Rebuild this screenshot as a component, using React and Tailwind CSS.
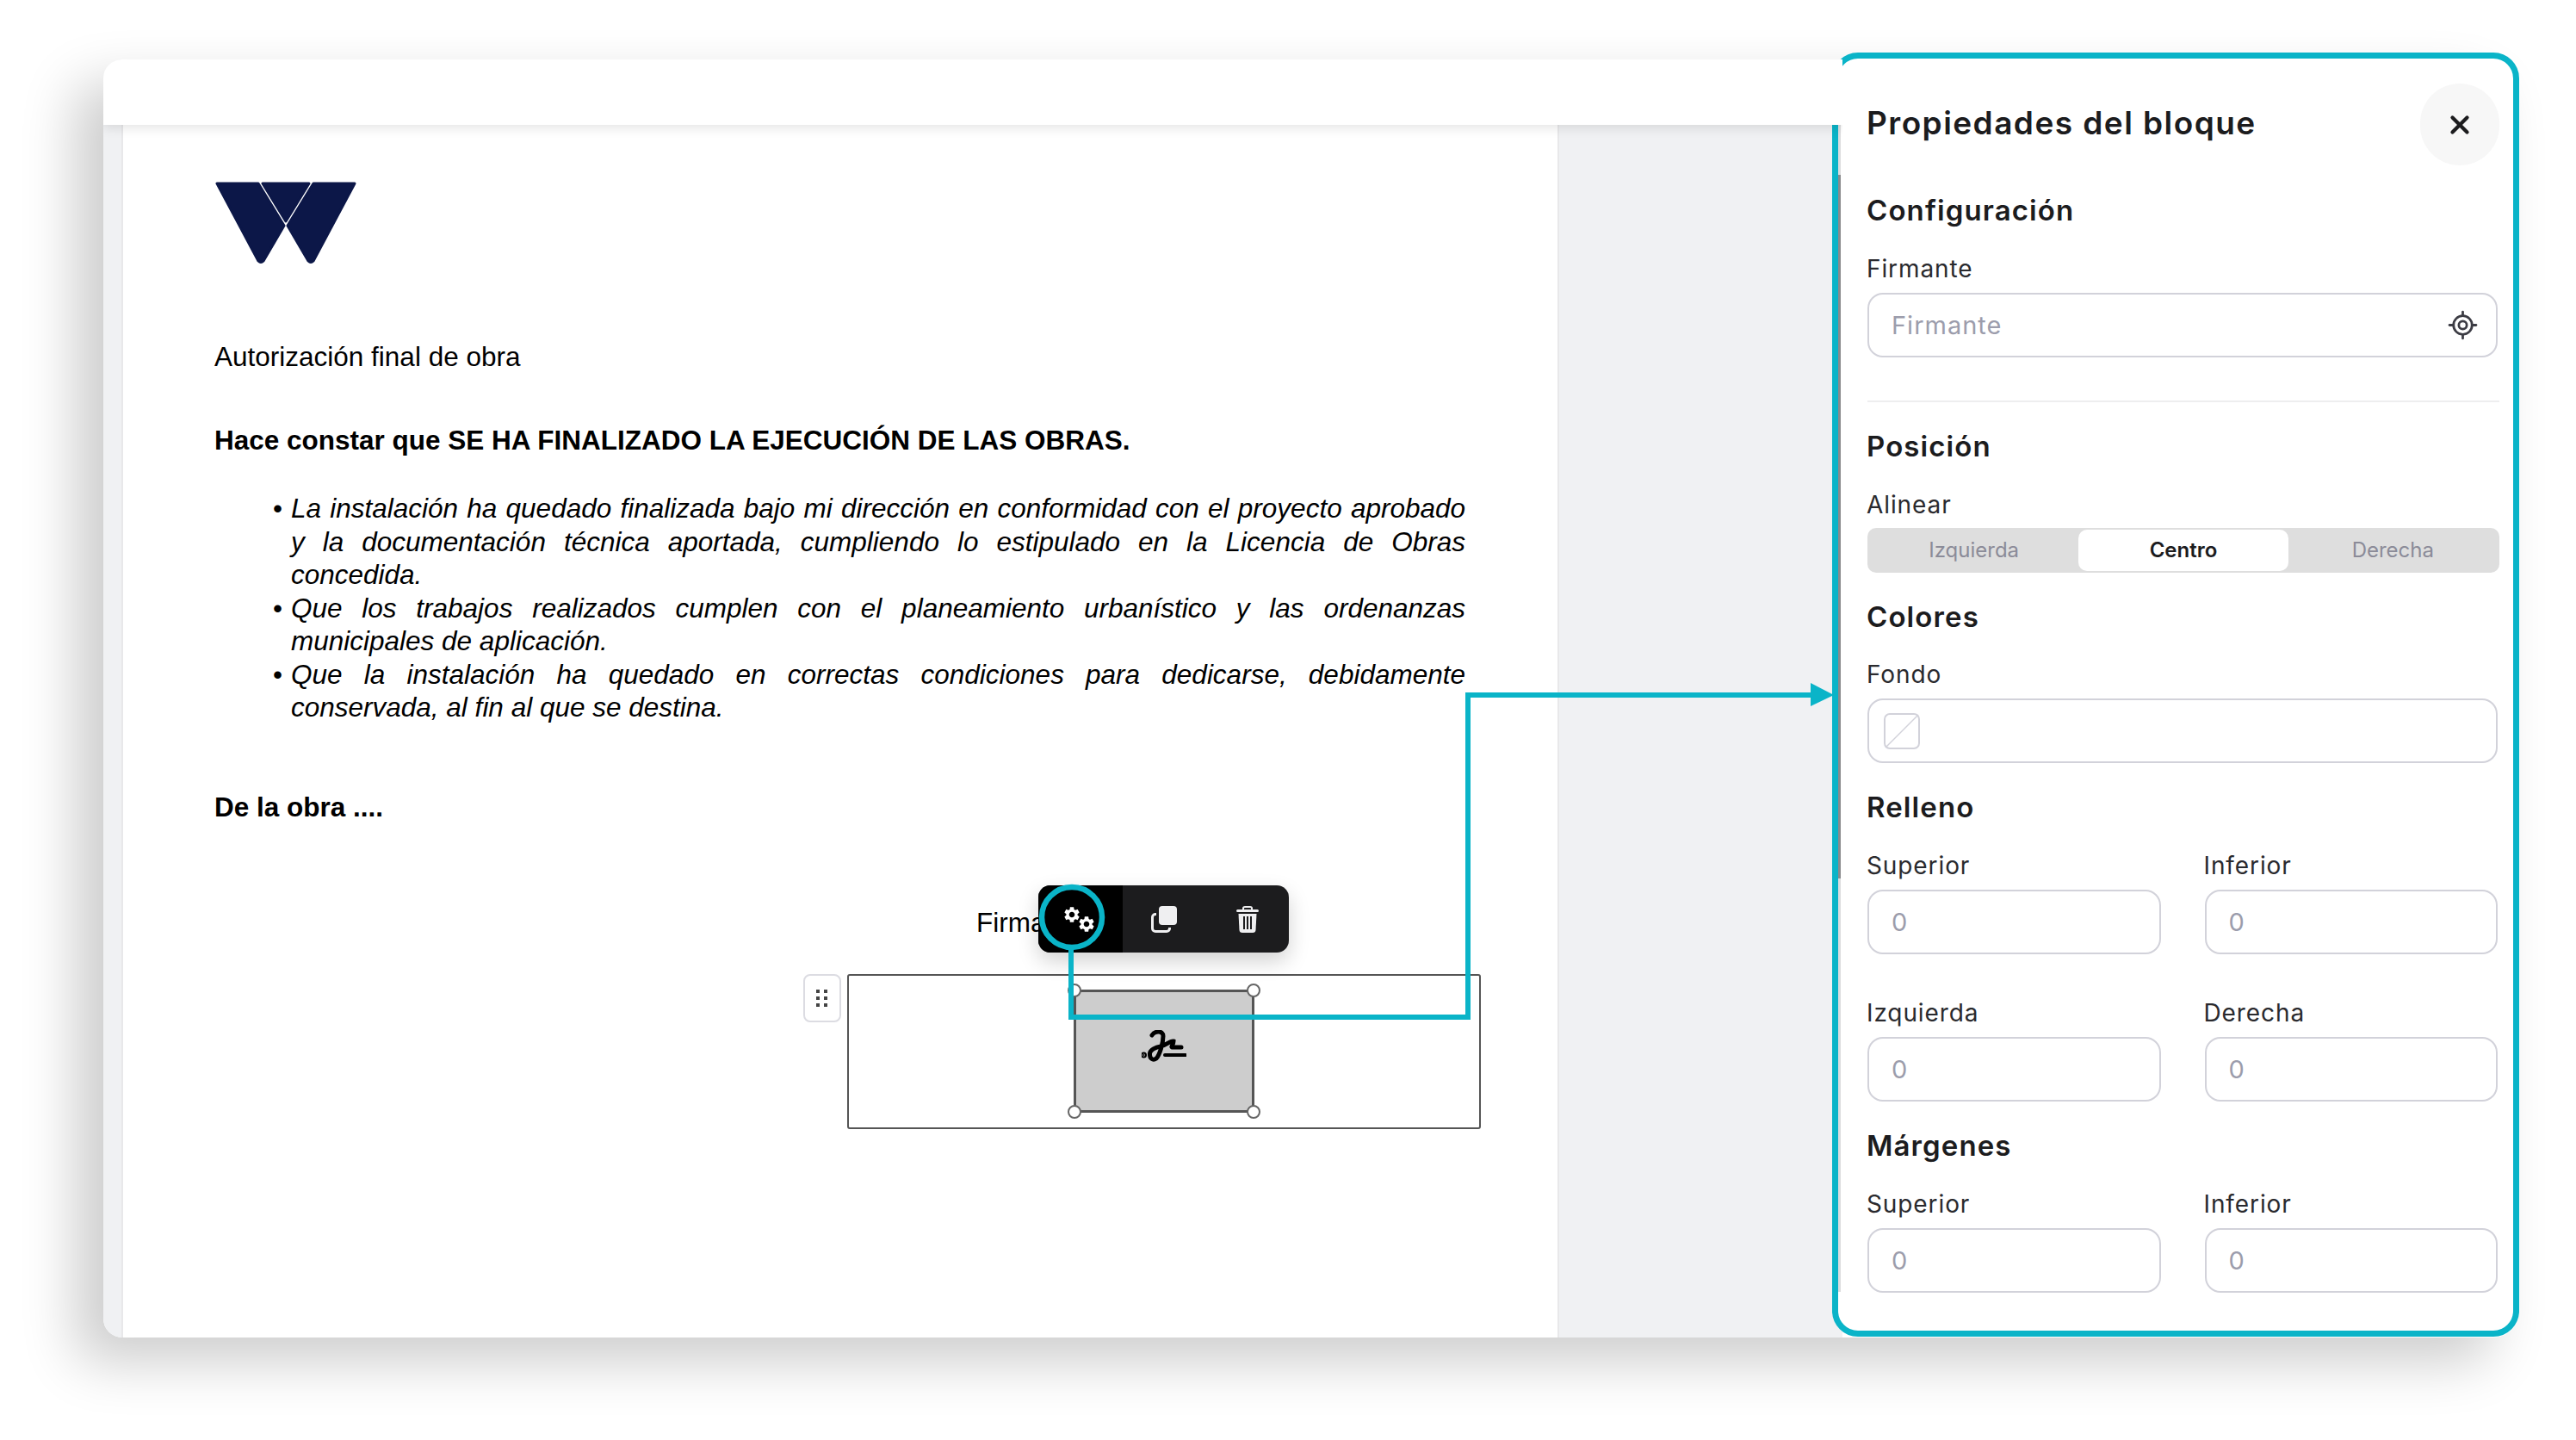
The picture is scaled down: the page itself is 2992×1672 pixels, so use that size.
import React from 'react';
import { X, LocateFixed } from 'lucide-react';
import { MdSettings } from 'react-icons/md';

const TEAL = '#0ab4c8';

const Logo = () => (
    <svg viewBox="0 0 164 96" className="ml-[1px] w-[164px] h-[96px] block" fill="#0c1748" stroke="#0c1748" strokeWidth="3" strokeLinejoin="round">
        <path d="M2 2 H50 L80 51 L56 92 Q53 95 50 92 Z" />
        <path d="M114 2 H162 L114 92 Q111 95 108 92 L84 51 Z" />
        <path d="M55 2 H109 L82 46 Z" />
    </svg>
);

const CopyIcon = () => (
    <svg viewBox="0 0 30 31" className="w-[30px] h-[31px]" fill="none">
        <rect x="9" y="0" width="21" height="22" rx="4" fill="#efeff1" />
        <path d="M6 9.5 H5 A3.5 3.5 0 0 0 1.5 13 V26 A3.5 3.5 0 0 0 5 29.5 H18 A3.5 3.5 0 0 0 21.5 26 V25" stroke="#efeff1" strokeWidth="3" />
    </svg>
);

const TrashIcon = () => (
    <svg viewBox="0 0 26 31" className="w-[26px] h-[31px]" fill="none">
        <path d="M8 4 V2.5 Q8 1 10 1 H16 Q18 1 18 2.5 V4" stroke="#efeff1" strokeWidth="2" />
        <rect x="0" y="4" width="26" height="3" rx="1.5" fill="#efeff1" />
        <path d="M2.5 9 H23.5 L22.5 28 Q22.3 31 19 31 H7 Q3.7 31 3.5 28 Z" fill="#efeff1" />
        <rect x="8" y="12" width="2" height="15" fill="#1c1c1e" />
        <rect x="12" y="12" width="2" height="15" fill="#1c1c1e" />
        <rect x="16" y="12" width="2" height="15" fill="#1c1c1e" />
    </svg>
);

const SignatureIcon = () => (
    <svg viewBox="0 0 52 37" className="w-[52px] h-[37px]" fill="none" stroke="#000" strokeWidth="5" strokeLinecap="round">
        <path d="M12 6 C15 1 25 0 25 7 C25 15 21 29 17 33 C13 36 9 33 9.5 27 C10 23 16 20 22 19 C28 18 33 12 37 13 C37 17 33 20 36 20 H46" />
        <path d="M27 29 H51" strokeWidth="4" />
        <circle cx="2.5" cy="29" r="1" fill="#000" />
    </svg>
);

const Corner = ({ className }) => (
    <span className={`absolute w-[16px] h-[16px] rounded-full bg-white border-2 border-[#666] ${className}`} />
);

const Heading = ({ className = '', children }) => (
    <h3 className={`-ml-[1px] text-[33px] leading-[40px] font-semibold tracking-[1.1px] text-[#1c1c1e] ${className}`}>{children}</h3>
);

const Label = ({ className = '', children }) => (
    <label className={`block -ml-[1px] text-[28px] leading-[36px] tracking-[0.9px] text-[#2a2a2e] ${className}`}>{children}</label>
);

const Field = ({ placeholder }) => (
    <input
        placeholder={placeholder}
        className="block w-full h-[75px] px-[26px] rounded-[18px] border-2 border-[#d2d2da] bg-white text-[29px] tracking-[1px] outline-none placeholder:text-[#9c9dac]"
    />
);

const TwoInputs = ({ left, right, className = '' }) => (
    <div className={`grid grid-cols-2 gap-x-[51px] pr-[2px] ${className}`}>
        <div>
            <Label>{left}</Label>
            <div className="mt-[10px]"><Field placeholder="0" /></div>
        </div>
        <div>
            <Label>{right}</Label>
            <div className="mt-[10px]"><Field placeholder="0" /></div>
        </div>
    </div>
);

const PropertiesPanel = () => (
    <aside className="absolute left-[2008px] top-[-8px] w-[798px] h-[1491px] rounded-[30px] border-[7px] border-[#0ab4c8] bg-white pl-[34px] pr-[16px] pt-[29px] font-[Inter,sans-serif]">
        {/* grey sliver along the inside of the left edge */}
        <span className="absolute left-0 top-[28px] w-[3px] h-[107px] bg-[#dcdcde]" />
        <span className="absolute left-0 top-[135px] w-[3px] h-[817px] bg-[#8a8a8c]" />
        <span className="absolute left-0 top-[952px] w-[3px] h-[480px] bg-[#dcdcde]" />
        <div className="flex items-center justify-between h-[95px]">
            <h2 className="-ml-[1px] pb-[3px] text-[37px] font-semibold tracking-[1.45px] text-[#1c1c1e]">Propiedades del bloque</h2>
            <button type="button" className="w-[92px] h-[95px] rounded-full bg-[#f7f7f7] flex items-center justify-center text-[#1c1c1e]">
                <X className="w-[34px] h-[34px]" strokeWidth={3} />
            </button>
        </div>

        <Heading className="mt-[32px]">Configuración</Heading>
        <Label className="mt-[30px]">Firmante</Label>
        <div className="relative mt-[10px] mr-[2px]">
            <Field placeholder="Firmante" />
            <LocateFixed className="absolute right-[22px] top-[19px] w-[37px] h-[37px] text-[#3c3c44]" strokeWidth={1.8} />
        </div>
        <div className="mt-[50px] h-[2px] bg-[#eeeeef]" />

        <Heading className="mt-[31px]">Posición</Heading>
        <Label className="mt-[30px]">Alinear</Label>
        <div className="mt-[9px] h-[52px] rounded-[10px] bg-[#dedede] grid grid-cols-3 p-[2px] text-[24px] text-[#8b8b98]">
            <span className="flex items-center justify-center">Izquierda</span>
            <span className="flex items-center justify-center rounded-[10px] bg-white font-semibold text-[#1c1c1e]">Centro</span>
            <span className="flex items-center justify-center">Derecha</span>
        </div>

        <Heading className="mt-[31px]">Colores</Heading>
        <Label className="mt-[29px]">Fondo</Label>
        <div className="mt-[10px] mr-[2px] h-[75px] rounded-[18px] border-2 border-[#d2d2da] flex items-center pl-[17px]">
            <svg viewBox="0 0 42 42" className="w-[42px] h-[42px]" fill="none" stroke="#d2d2da" strokeWidth="1.5">
                <rect x="1" y="1" width="40" height="40" rx="6" strokeWidth="2" />
                <path d="M2 40 L40 2" />
            </svg>
        </div>

        <Heading className="mt-[31px]">Relleno</Heading>
        <TwoInputs left="Superior" right="Inferior" className="mt-[30px]" />
        <TwoInputs left="Izquierda" right="Derecha" className="mt-[50px]" />

        <Heading className="mt-[31px]">Márgenes</Heading>
        <TwoInputs left="Superior" right="Inferior" className="mt-[30px]" />
    </aside>
);

const bullets = [
    'La instalación ha quedado finalizada bajo mi dirección en conformidad con el proyecto aprobado y la documentación técnica aportada, cumpliendo lo estipulado en la Licencia de Obras concedida.',
    'Que los trabajos realizados cumplen con el planeamiento urbanístico y las ordenanzas municipales de aplicación.',
    'Que la instalación ha quedado en correctas condiciones para dedicarse, debidamente conservada, al fin al que se destina.',
];

const Document = () => (
    <div className="w-[1670px] h-full bg-white border-x-2 border-[#e8e8ea] pt-[66px] pl-[106px] font-['Liberation_Sans',Arial,sans-serif] text-[31.5px] leading-[38px] text-black">
        <Logo />
        <p className="mt-[88px]">Autorización final de obra</p>
        <p className="mt-[59px] font-bold">Hace constar que SE HA FINALIZADO LA EJECUCIÓN DE LAS OBRAS.</p>
        <ul className="mt-[41px] ml-[68px] w-[1385px] italic leading-[38.5px]">
            {bullets.map(t => (
                <li key={t} className="flex">
                    <span className="w-[21px] shrink-0 not-italic">•</span>
                    <span className="flex-1 text-justify">{t}</span>
                </li>
            ))}
        </ul>
        <p className="mt-[77px] font-bold">De la obra ....</p>
        <p className="mt-[96px] ml-[885px]">Firma</p>
        <div className="mt-[41px] ml-[684px] flex items-start gap-[7px]">
            <div className="w-[44px] h-[56px] rounded-[8px] border-2 border-[#dcdce2] bg-white grid grid-cols-2 content-center justify-center gap-x-[3px] gap-y-[4px] px-[13px]">
                {[0, 1, 2, 3, 4, 5].map(i => <span key={i} className="w-[4px] h-[4px] bg-[#444]" />)}
            </div>
            <div className="w-[736px] h-[180px] rounded-[3px] border-2 border-[#555] flex justify-center pt-[16px]">
                <div className="relative w-[210px] h-[143px] rounded-[2px] border-[3px] border-[#555] bg-[#cdcdcd] flex justify-center pt-[44px]">
                    <SignatureIcon />
                    <Corner className="left-[-10px] top-[-10px]" />
                    <Corner className="right-[-10px] top-[-10px]" />
                    <Corner className="left-[-10px] bottom-[-10px]" />
                    <Corner className="right-[-10px] bottom-[-10px]" />
                </div>
            </div>
        </div>
    </div>
);

const Toolbar = () => (
    <div className="absolute left-[1086px] top-[959px] w-[291px] h-[78px] rounded-[14px] bg-[#1c1c1e] flex overflow-hidden shadow-[0_10px_24px_rgba(0,0,0,0.18)]">
        <div className="relative w-[98px] bg-black">
            <MdSettings className="absolute left-[28px] top-[23px] w-[22px] h-[22px] text-white" />
            <MdSettings className="absolute left-[45px] top-[34px] w-[22px] h-[22px] text-white" />
        </div>
        <div className="flex-1 flex items-center justify-center"><CopyIcon /></div>
        <div className="flex-1 flex items-center justify-center"><TrashIcon /></div>
    </div>
);

// connector from the gear button to the panel, drawn over everything
const Connector = () => (
    <svg className="absolute left-0 top-0 w-[2992px] h-[1672px] pointer-events-none" viewBox="0 0 2992 1672" fill="none">
        <ellipse cx="1245" cy="1065" rx="35" ry="35" stroke={TEAL} strokeWidth="6.5" />
        <path d="M1244 1100 V1181 H1705 V807 H2106" stroke={TEAL} strokeWidth="6" />
        <path d="M2103 793 L2130 807 L2103 820 Z" fill={TEAL} />
    </svg>
);

export default function App() {
    return (
        <div className="relative w-[2992px] h-[1672px] overflow-hidden bg-white pt-[69px] pl-[120px]">
            <div className="relative w-[2806px] h-[1484px] rounded-[30px] rounded-tl-[22px] rounded-bl-[22px] bg-white shadow-[-32px_28px_64px_rgba(0,0,0,0.2)]">
                <div className="w-[2020px] h-full rounded-l-[22px] overflow-hidden bg-[#f0f1f3] flex flex-col">
                    <div className="relative z-10 h-[76px] shrink-0 bg-white shadow-[0_4px_12px_rgba(0,0,0,0.1)]" />
                    <div className="flex-1 min-h-0 pl-[21px]">
                        <Document />
                    </div>
                </div>
                <Toolbar />
                <PropertiesPanel />
            </div>
            <Connector />
        </div>
    );
}
